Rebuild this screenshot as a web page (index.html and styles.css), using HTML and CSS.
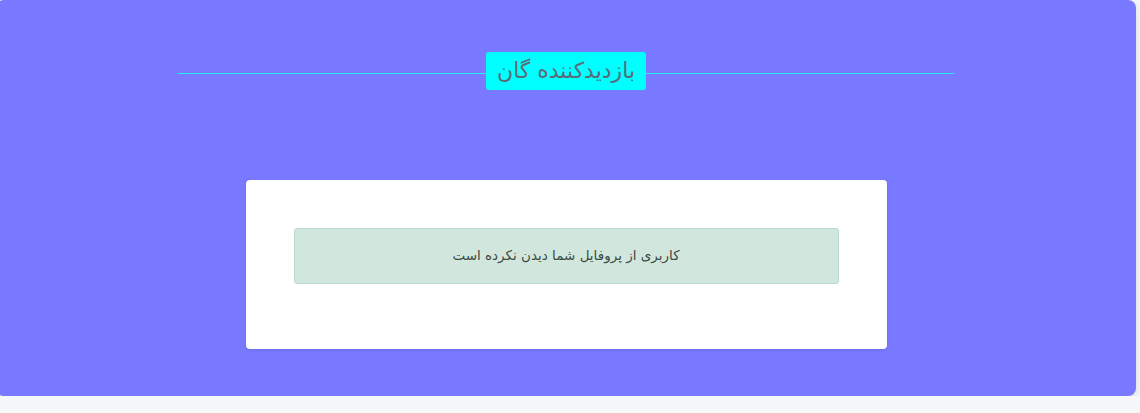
FILE: index.html
```html
<!DOCTYPE html>
<html lang="fa" dir="rtl">
<head>
    <meta charset="UTF-8">
    <meta name="viewport" content="width=device-width, initial-scale=1.0">
    <title>بازدیدکننده گان</title>
    <link rel="stylesheet" href="styles.css">
</head>
<body>

<div class="panel">
    <div class="title-row">
        <span class="title-badge">بازدیدکننده گان</span>
    </div>

    <div class="card">
        <div class="alert-empty">کاربری از پروفایل شما دیدن نکرده است</div>
    </div>
</div>

</body>
</html>
```

FILE: styles.css
```css
body {
    font-family: "DejaVu Sans", "Noto Sans", sans-serif;
    margin: 0;
    padding: 0;
    background-color: #f6f7f9;
    overflow: hidden;
}

.panel {
    width: 1140px;
    height: 396px;
    margin-right: 4px;
    box-sizing: border-box;
    padding-top: 52px;
    background-color: #7879ff;
    border-radius: 8px;
    box-shadow: 0 3px 8px rgba(0, 0, 0, 0.12);
}

/* Heading with a line running behind it */
.title-row {
    position: relative;
    width: 776px;
    height: 38px;
    margin: 0 auto;
    display: flex;
    justify-content: center;
}

.title-row::before {
    content: "";
    position: absolute;
    left: 0;
    right: 0;
    top: 21px;
    border-top: 1px solid #22eeff;
}

.title-badge {
    position: relative;
    z-index: 1;
    height: 38px;
    line-height: 38px;
    padding: 0 11px;
    background-color: #00ffff;
    color: #5b6b78;
    font-size: 22px;
    border-radius: 3px;
}

.card {
    width: 641px;
    margin: 90px auto 0;
    padding: 48px 48px 49px;
    box-sizing: border-box;
    background-color: white;
    border-radius: 4px;
    box-shadow: 0 1px 3px rgba(0, 0, 0, 0.1);
}

.alert-empty {
    height: 56px;
    margin-bottom: 16px;
    box-sizing: border-box;
    padding-top: 18px;
    text-align: center;
    font-size: 13.5px;
    color: #3b4a44;
    background-color: #d1e7dd;
    border: 1px solid #badbcc;
    border-radius: 3px;
}
```
